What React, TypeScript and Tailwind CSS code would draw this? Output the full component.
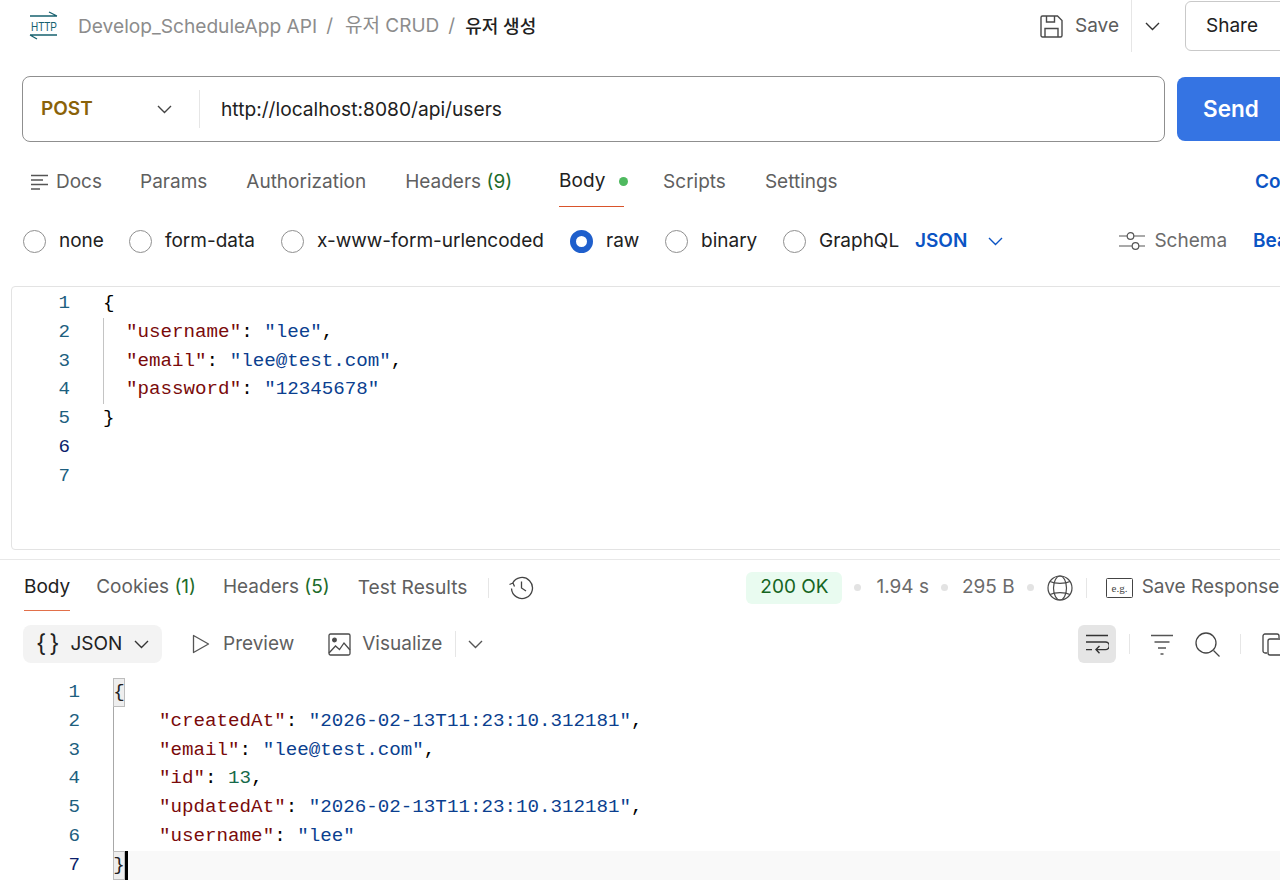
import type { ReactNode } from "react";

const ui = "font-['Inter','Noto_Sans_CJK_KR',sans-serif]";
const mono = "font-['Liberation_Mono','Noto_Sans_CJK_KR',monospace]";

function Chevron({ className = "" }: { className?: string }) {
  return (
    <svg width="15" height="9" viewBox="0 0 15 9" fill="none" stroke="currentColor" strokeWidth="1.4" className={`shrink-0 ${className}`}>
      <path d="M1 1l6.500 6.500L14 1" />
    </svg>
  );
}

function HttpLogo() {
  return (
    <svg width="30" height="30" viewBox="0 0 30 30" fill="none" stroke="#17616f" strokeWidth="1.300" className="shrink-0 overflow-visible">
      <path d="M1 5h27M20 1l8 4" />
      <text x="15" y="20" textAnchor="middle" fontSize="13" fill="#17616f" stroke="none" fontFamily="Liberation Sans" textLength="26" lengthAdjust="spacingAndGlyphs">HTTP</text>
      <path d="M1 24h27M1 24l7 4" />
    </svg>
  );
}

function SaveIcon() {
  return (
    <svg width="23" height="23" viewBox="0 0 23 23" fill="none" stroke="#4a4a4a" strokeWidth="1.400" className="shrink-0">
      <path d="M2.500 1h15l4.500 4.500v15a1.500 1.500 0 0 1-1.500 1.500h-18A1.500 1.500 0 0 1 1 20.500v-18A1.500 1.500 0 0 1 2.500 1z" />
      <path d="M6.500 1v6h8V1M5 22v-8.500h13V22" />
    </svg>
  );
}

function Radio({ checked = false }: { checked?: boolean }) {
  if (checked) {
    return <span className="w-[23px] h-[23px] rounded-full border-[6px] border-[#1f5fcc] bg-white shrink-0" />;
  }
  return <span className="w-[23px] h-[23px] rounded-full border border-[#8f8f8f] bg-white shrink-0" />;
}

function RadioItem({ label, checked, width }: { label: string; checked?: boolean; width: string }) {
  return (
    <div className={`flex items-center gap-[13px] shrink-0 ${width}`}>
      <Radio checked={checked} />
      <span className="text-[#212121]">{label}</span>
    </div>
  );
}

function Sep({ className = "" }: { className?: string }) {
  return <span className={`w-px bg-[#e6e6e6] shrink-0 ${className}`} />;
}

function Dot({ className = "" }: { className?: string }) {
  return <span className={`w-[7px] h-[7px] rounded-full bg-[#e3e3e3] shrink-0 ${className}`} />;
}

const Key = ({ children }: { children: ReactNode }) => <span className="text-[#7a0a0a]">{children}</span>;
const Str = ({ children }: { children: ReactNode }) => <span className="text-[#0b3f8f]">{children}</span>;
const Num = ({ children }: { children: ReactNode }) => <span className="text-[#16694a]">{children}</span>;

function RequestLine({ n, children, guide, active }: { n: number; children?: ReactNode; guide?: boolean; active?: boolean }) {
  return (
    <div className="flex h-[28.800px] items-center">
      <span className={`w-[58px] text-right shrink-0 ${active ? "text-[#0b1f6b]" : "text-[#1d5f7f]"}`}>{n}</span>
      <span className={`ml-[33px] h-full flex items-center whitespace-pre ${guide ? "border-l border-[#c4c4c4] pl-[22px]" : ""}`}>{children}</span>
    </div>
  );
}

function ResponseLine({ n, children }: { n: number; children?: ReactNode }) {
  return (
    <div className="flex h-[28.800px] items-center">
      <span className="w-[80px] text-right shrink-0 text-[#1d5f7f]">{n}</span>
      <span className="ml-[33px] h-full flex items-center whitespace-pre grow border-l-[1.500px] border-[#a8a8a8] pl-[45px]">{children}</span>
    </div>
  );
}

function Brace({ char }: { char: string }) {
  return <span className="w-[12px] h-full bg-[#eeeeee] border border-[#bdbdbd] flex items-center justify-center text-[#222] shrink-0">{char}</span>;
}

export default function App() {
  return (
    <div className={`w-[1280px] h-[888px] overflow-hidden bg-white text-[19px] whitespace-nowrap ${ui}`}>
      {/* breadcrumb */}
      <div className="h-[52px] flex items-center pl-[29px] w-[1320px]">
        <HttpLogo />
        <span className="ml-[19px] text-[#8c8c8c] text-[19.150px]">Develop_ScheduleApp API</span>
        <span className="ml-[9px] text-[#8c8c8c]">/</span>
        <span className="ml-[12px] text-[#8c8c8c]">유저 CRUD</span>
        <span className="ml-[9px] text-[#8c8c8c]">/</span>
        <span className="ml-[10px] text-[#212121] font-medium text-[18px]">유저 생성</span>
        <div className="ml-auto flex items-center h-full">
          <SaveIcon />
          <span className="ml-[12px] text-[#5c5c5c]">Save</span>
          <Sep className="ml-[12px] h-full" />
          <Chevron className="ml-[13px] text-[#333]" />
          <div className="ml-[25px] w-[135px] h-[50px] border border-[#c9c9c9] rounded-[6px] pl-[20px] flex items-center text-[#212121]">Share</div>
        </div>
      </div>

      {/* url bar */}
      <div className="mt-[24px] pl-[22px] flex items-center w-[1400px]">
        <div className="w-[1143px] h-[66px] border border-[#8f8f8f] rounded-[8px] flex items-center">
          <span className="ml-[18px] w-[116px] font-semibold text-[#8a6209]">POST</span>
          <Chevron className="text-[#444]" />
          <Sep className="ml-[27px] h-[38px]" />
          <span className="ml-[21px] text-[#212121] text-[19.200px]">http://localhost:8080/api/users</span>
        </div>
        <div className="ml-[12px] w-[160px] h-[64px] bg-[#3574e3] rounded-[8px] flex items-center pl-[26px] text-white text-[22.500px] font-semibold">Send</div>
      </div>

      {/* request tabs */}
      <div className="mt-[19px] h-[46px] pb-[4px] pl-[31px] flex items-center text-[#5f5f5f]">
        <svg width="17" height="16" viewBox="0 0 17 16" fill="none" stroke="#555" strokeWidth="1.300" className="shrink-0">
          <path d="M0 1.500h17M0 6h12M0 10.500h17M0 15h9" />
        </svg>
        <span className="ml-[8px]">Docs</span>
        <span className="ml-[38px]">Params</span>
        <span className="ml-[39px]">Authorization</span>
        <span className="ml-[39px]">Headers <span className="text-[#1c6b2a]">(9)</span></span>
        <div className="ml-[47px] h-[46px] -mb-[4px] pb-[4px] flex items-center border-b border-[#d9542b] w-[65px] shrink-0">
          <span className="text-[#212121]">Body</span>
          <span className="ml-[14px] w-[9px] h-[9px] rounded-full bg-[#4fb95f] shrink-0" />
        </div>
        <span className="ml-[39px]">Scripts</span>
        <span className="ml-[39px]">Settings</span>
        <span className="ml-auto w-[25px] overflow-hidden font-semibold text-[#0b54c4]">Cookies</span>
      </div>

      {/* body type */}
      <div className="mt-[12px] h-[44px] pl-[23px] flex items-center">
        <RadioItem label="none" width="w-[106px]" />
        <RadioItem label="form-data" width="w-[152px]" />
        <RadioItem label="x-www-form-urlencoded" width="w-[289px]" />
        <RadioItem label="raw" checked width="w-[95px]" />
        <RadioItem label="binary" width="w-[118px]" />
        <RadioItem label="GraphQL" width="w-[132px]" />
        <span className="font-semibold text-[#0b54c4]">JSON</span>
        <Chevron className="ml-[21px] text-[#0b54c4]" />
        <svg width="26" height="20" viewBox="0 0 26 20" fill="none" stroke="#555" strokeWidth="1.200" className="ml-[116px] shrink-0">
          <path d="M0 5h8M15 5h11M0 15h13M20 15h6" />
          <circle cx="11.500" cy="5" r="3.300" />
          <circle cx="16.500" cy="15" r="3.300" />
        </svg>
        <span className="ml-[9px] text-[#6b6b6b]">Schema</span>
        <span className="ml-[26px] w-[27px] overflow-hidden font-semibold text-[#0b54c4]">Beautify</span>
      </div>

      {/* request editor */}
      <div className={`mt-[23px] ml-[11px] w-[1300px] h-[264px] border border-[#e3e3e3] rounded-[4px] text-[19.200px] pt-[2px] ${mono}`}>
        <RequestLine n={1}>{"{"}</RequestLine>
        <RequestLine n={2} guide><Key>"username"</Key>: <Str>"lee"</Str>,</RequestLine>
        <RequestLine n={3} guide><Key>"email"</Key>: <Str>"lee@test.com"</Str>,</RequestLine>
        <RequestLine n={4} guide><Key>"password"</Key>: <Str>"12345678"</Str></RequestLine>
        <RequestLine n={5}>{"}"}</RequestLine>
        <RequestLine n={6} active />
        <RequestLine n={7} />
      </div>

      <div className="mt-[9px] h-px bg-[#e8e8e8]" />

      {/* response tabs */}
      <div className="mt-[9px] h-[42px] pb-[5px] pl-[24px] flex items-center text-[#5f5f5f] w-[1400px]">
        <div className="h-[42px] -mb-[5px] pb-[5px] flex items-center border-b border-[#e2704a] text-[#212121]">Body</div>
        <span className="ml-[26px]">Cookies <span className="text-[#1c6b2a]">(1)</span></span>
        <span className="ml-[27px]">Headers <span className="text-[#1c6b2a]">(5)</span></span>
        <span className="ml-[28px] text-[19.200px]">Test Results</span>
        <Sep className="ml-[21px] h-[20px]" />
        <svg width="25" height="25" viewBox="0 0 25 25" fill="none" stroke="#444" strokeWidth="1.300" className="ml-[20px] shrink-0">
          <path d="M3.500 8.500a10.500 10.500 0 1 1-1 5M0.500 9.500l3.500-1.500 1.500 3.500" />
          <path d="M12.500 6.500v6.500l4.500 3" />
        </svg>
        <div className="ml-[212px] w-[96px] h-[32px] rounded-[6px] bg-[#e9fbf0] text-[#16651f] flex items-center justify-center">200 OK</div>
        <Dot className="ml-[12px]" />
        <span className="ml-[15px] text-[#6b6b6b]">1.94 s</span>
        <Dot className="ml-[12px]" />
        <span className="ml-[14px] text-[#6b6b6b]">295 B</span>
        <Dot className="ml-[12px]" />
        <svg width="26" height="26" viewBox="0 0 26 26" fill="none" stroke="#4a4a4a" strokeWidth="1.200" className="ml-[13px] shrink-0">
          <circle cx="13" cy="13" r="12" />
          <ellipse cx="13" cy="13" rx="6.500" ry="12" />
          <path d="M3 6.500c5 2.500 15 2.500 20 0M3 19.500c5-2.500 15-2.500 20 0" />
        </svg>
        <Sep className="ml-[13px] h-[20px]" />
        <svg width="27" height="20" viewBox="0 0 27 20" className="ml-[19px] shrink-0">
          <rect x="0.500" y="0.500" width="26" height="19" rx="1" fill="none" stroke="#444" />
          <text x="13.500" y="14" textAnchor="middle" fontSize="11" fill="#444" fontFamily="Liberation Serif">e.g.</text>
        </svg>
        <span className="ml-[9px] text-[#5f5f5f]">Save Response</span>
      </div>

      {/* response toolbar */}
      <div className="mt-[14px] h-[38px] pl-[23px] flex items-center text-[#5f5f5f] w-[1320px]">
        <div className="w-[139px] h-[38px] rounded-[8px] bg-[#f3f3f3] flex items-center pl-[13px] text-[#212121] shrink-0">
          <span className="text-[24px] leading-none tracking-[3px]">{"{}"}</span>
          <span className="ml-[8px]">JSON</span>
          <Chevron className="ml-[12px] text-[#333]" />
        </div>
        <svg width="18" height="20" viewBox="0 0 18 20" fill="none" stroke="#555" strokeWidth="1.300" className="ml-[30px] shrink-0">
          <path d="M1.500 1.500v17L16.500 10z" strokeLinejoin="round" />
        </svg>
        <span className="ml-[13px]">Preview</span>
        <svg width="23" height="23" viewBox="0 0 23 23" fill="none" stroke="#4a4a4a" strokeWidth="1.300" className="ml-[34px] shrink-0">
          <rect x="1" y="1" width="21" height="21" rx="1.500" />
          <circle cx="6.500" cy="7" r="1.800" fill="#4a4a4a" />
          <path d="M1 20l6.500-7 4 3.500L16 10l6 7" />
        </svg>
        <span className="ml-[11px]">Visualize</span>
        <Sep className="ml-[13px] h-[26px]" />
        <Chevron className="ml-[12px] text-[#555]" />
        <div className="ml-auto flex items-center">
          <div className="w-[38px] h-[38px] rounded-[6px] bg-[#e5e5e5] flex items-center justify-center shrink-0">
            <svg width="24" height="23" viewBox="0 0 24 23" fill="none" stroke="#333" strokeWidth="1.400">
              <path d="M1 2.500h22M1 9h19.500a3.800 3.800 0 0 1 0 7.600H11M14.500 13l-3.500 3.600 3.500 3.600M1 16.600h6" />
            </svg>
          </div>
          <Sep className="ml-[13px] h-[20px]" />
          <svg width="22" height="21" viewBox="0 0 22 21" fill="none" stroke="#555" strokeWidth="1.400" className="ml-[21px] shrink-0">
            <path d="M0 1.500h22M3.500 8h15M7 14h8M9.500 20h3" />
          </svg>
          <svg width="25" height="25" viewBox="0 0 25 25" fill="none" stroke="#444" strokeWidth="1.300" className="ml-[22px] shrink-0">
            <circle cx="11" cy="11" r="10" />
            <path d="M18.500 18.500L24.500 24.500" />
          </svg>
          <Sep className="ml-[20px] h-[20px]" />
          <svg width="58" height="24" viewBox="0 0 58 24" fill="none" stroke="#444" strokeWidth="1.300" className="ml-[21px] shrink-0">
            <path d="M5 21H3a2 2 0 0 1-2-2V4a2 2 0 0 1 2-2h12a2 2 0 0 1 2 2v2" />
            <rect x="6" y="7" width="17" height="16" rx="2" />
          </svg>
        </div>
      </div>

      {/* response body */}
      <div className={`mt-[15px] w-[1280px] text-[19.200px] ${mono}`}>
        <div className="flex h-[28.800px] items-center">
          <span className="w-[80px] text-right text-[#1d5f7f] shrink-0">1</span>
          <span className="ml-[33px] h-full flex"><Brace char="{" /></span>
        </div>
        <ResponseLine n={2}><Key>"createdAt"</Key>: <Str>"2026-02-13T11:23:10.312181"</Str>,</ResponseLine>
        <ResponseLine n={3}><Key>"email"</Key>: <Str>"lee@test.com"</Str>,</ResponseLine>
        <ResponseLine n={4}><Key>"id"</Key>: <Num>13</Num>,</ResponseLine>
        <ResponseLine n={5}><Key>"updatedAt"</Key>: <Str>"2026-02-13T11:23:10.312181"</Str>,</ResponseLine>
        <ResponseLine n={6}><Key>"username"</Key>: <Str>"lee"</Str></ResponseLine>
        <div className="flex h-[28.800px] items-center">
          <span className="w-[80px] text-right text-[#0b1f6b] shrink-0">7</span>
          <span className="ml-[33px] h-full flex grow bg-[#f9f9f9]">
            <Brace char="}" />
            <span className="w-[3px] h-full bg-black shrink-0" />
          </span>
        </div>
      </div>
    </div>
  );
}
